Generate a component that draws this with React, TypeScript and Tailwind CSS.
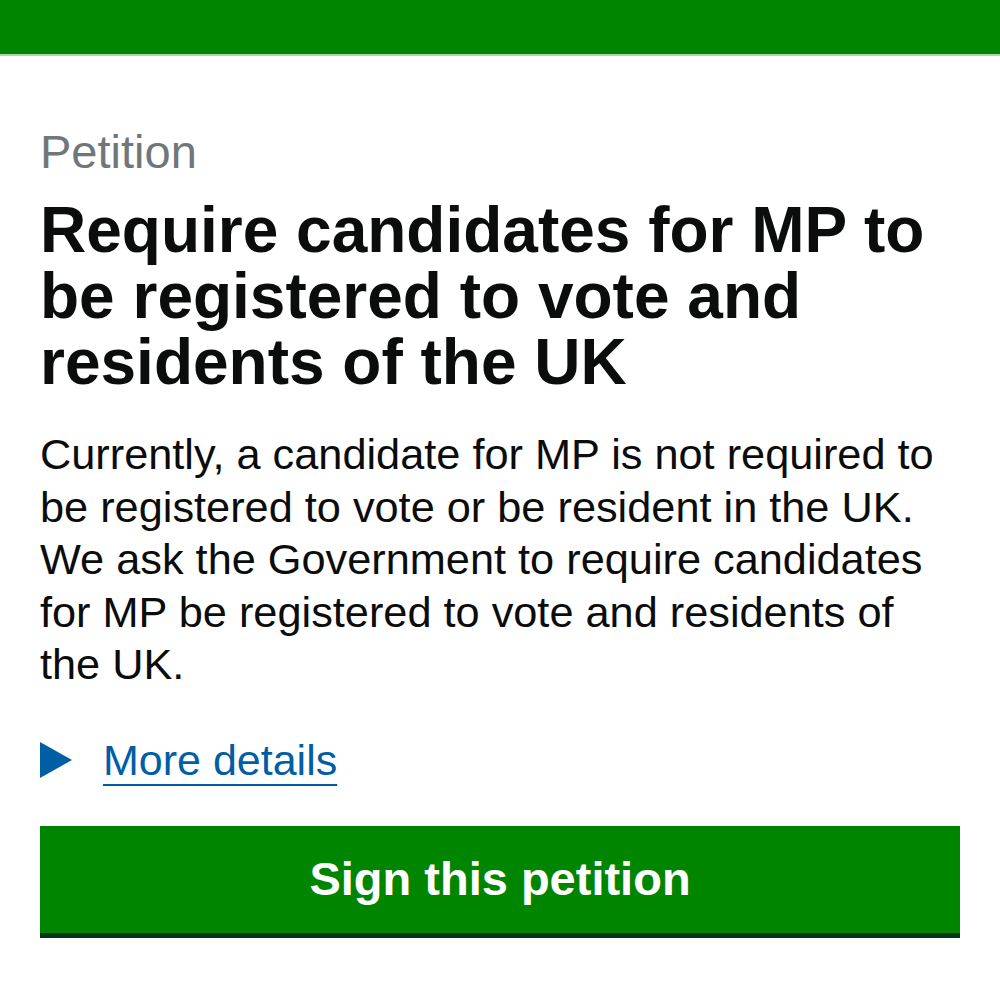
import React from 'react';

export default function App() {
  return (
    <div className="w-[1000px] h-[1000px] bg-white font-['Liberation_Sans',Arial,sans-serif] overflow-hidden">
      <div className="h-[56px] bg-[#008500] border-b-2 border-[#a6dba6]" />
      <main className="px-[40px] pt-[68px]">
        <p className="text-[47px] leading-[56px] text-[#6f777b]">Petition</p>
        <h1 className="mt-[17px] text-[64px] leading-[66px] font-bold text-[#0b0c0c]">
          Require candidates for MP to be registered to vote and residents of the UK
        </h1>
        <p className="mt-[33px] max-w-[900px] text-[43.3px] leading-[52.5px] text-[#0b0c0c]">
          Currently, a candidate for MP is not required to be registered to vote or be resident in the UK.
          We ask the Government to require candidates for MP be registered to vote and residents of the UK.
        </p>
        <div className="mt-[43px] flex items-center gap-[31px]">
          <svg width="32" height="36" viewBox="0 0 32 36" className="shrink-0">
            <polygon points="0,0 32,18 0,36" fill="#005ea5" />
          </svg>
          <a className="text-[43px] leading-[52px] text-[#005ea5] underline decoration-2 underline-offset-[9px]">
            More details
          </a>
        </div>
        <button className="mt-[40px] w-full h-[112px] bg-[#008500] border-b-[5px] border-[#003618] text-white text-[47px] font-bold">
          Sign this petition
        </button>
      </main>
    </div>
  );
}
